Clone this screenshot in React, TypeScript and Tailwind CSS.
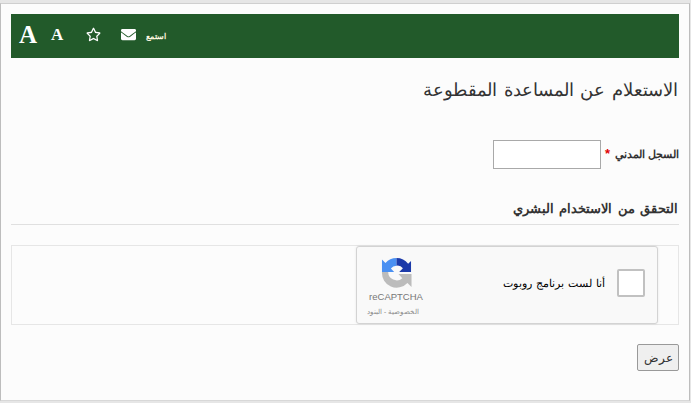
import { FaEnvelope, FaRegStar } from "react-icons/fa";

function RecaptchaLogo() {
  return (
    <svg width="31" height="31" viewBox="0 0 32 32" aria-hidden="true">
      {/* grey lower arrow */}
      <path d="M1 15.5h6.4a8.8 8.8 0 0 0 14.6 6.4L18 17.5h13.5V31l-4.2-4.2A15.2 15.2 0 0 1 1 15.5z" fill="#bcbcbc" />
      {/* light blue arrow */}
      <path d="M16 1A15 15 0 0 0 4.6 6.2L1 2.6V15.5h12.6l-3.4-3.6A7 7 0 0 1 16 9z" fill="#4a90f2" />
      {/* dark blue arrow */}
      <path d="M16 1a15 15 0 0 1 12 6l3-3v11.5H18.8l3.8-4A7 7 0 0 0 16 9z" fill="#1c3aa9" />
    </svg>
  );
}

export default function App() {
  return (
    <div className="w-[691px] h-[403px] overflow-hidden bg-[#e6e6e6] pt-[3px] font-['Liberation_Sans',sans-serif]">
      <div dir="rtl" className="h-[398px] w-[690px] border border-[#bdbdbd] border-t-[#cfcfcf] border-b-[#d8d8d8] bg-[#fcfcfc] px-[10px] pt-[10px] text-[#333]">
        {/* toolbar */}
        <div dir="ltr" className="flex h-[44px] items-center bg-[#225a2a] pb-[3px] pl-[8px] text-white">
          <span className="w-[32px] font-['Liberation_Serif',serif] text-[25px] font-bold leading-none">A</span>
          <span className="w-[35px] font-['Liberation_Serif',serif] text-[17px] font-bold leading-none">A</span>
          <FaRegStar size={15} className="mr-[20px]" />
          <FaEnvelope size={15} className="mr-[10px]" />
          <span dir="rtl" className="mt-[3px] font-['Noto_Sans',sans-serif] text-[8px] font-bold text-[#fff8e0]">استمع</span>
        </div>

        <h1 className="mt-[15px] pr-[1px] font-['Noto_Sans',sans-serif] text-[18px] leading-[32px] text-[#333] [word-spacing:2px]">الاستعلام عن المساعدة المقطوعة</h1>

        <div className="mt-[34px] flex h-[30px] items-center">
          <label className="font-['Noto_Sans',sans-serif] text-[11px] font-bold text-[#333]">السجل المدني</label>
          <span className="mr-[5px] text-[13px] font-bold text-[#e00000]">*</span>
          <input className="mr-[4px] h-[29px] w-[108px] border border-[#a9a9a9] bg-white" />
        </div>

        <div className="mt-[26px] h-[30px] border-b border-[#e0e0e0] pr-[1px] font-['Noto_Sans',sans-serif] text-[13px] font-bold leading-[26px] text-[#333] [word-spacing:2px]">
          التحقق من الاستخدام البشري
        </div>

        {/* captcha */}
        <div className="mt-[20px] flex h-[80px] items-center border border-[#e6e6e6] pr-[20px]">
          <div className="flex h-[78px] w-[302px] items-center rounded-[3px] border border-[#d3d3d3] bg-[#f9f9f9] pr-[12px] shadow-[0_0_3px_rgba(0,0,0,0.08)]">
            <div className="mb-[5px] h-[28px] w-[28px] rounded-[2px] border-2 border-[#c1c1c1] bg-white" />
            <span className="mr-[12px] mb-[4px] font-['Liberation_Sans',sans-serif] text-[11px] text-black [word-spacing:1px]">أنا لست برنامج روبوت</span>
            <div className="mt-[4px] mr-auto ml-[8px] flex w-[62px] flex-col items-center">
              <RecaptchaLogo />
              <span dir="ltr" className="mt-[3px] text-[9.5px] leading-[12px] text-[#777]">reCAPTCHA</span>
              <span className="mt-[4px] mr-[6px] text-[6.5px] leading-[10px] text-[#888]">الخصوصية - البنود</span>
            </div>
          </div>
        </div>

        <div className="mt-[19px] flex justify-start">
          <button className="h-[27px] w-[42px] rounded-[2px] border border-[#999] bg-[#efefef] font-['Liberation_Sans',sans-serif] text-[12px] text-[#333]">عرض</button>
        </div>
      </div>
    </div>
  );
}
